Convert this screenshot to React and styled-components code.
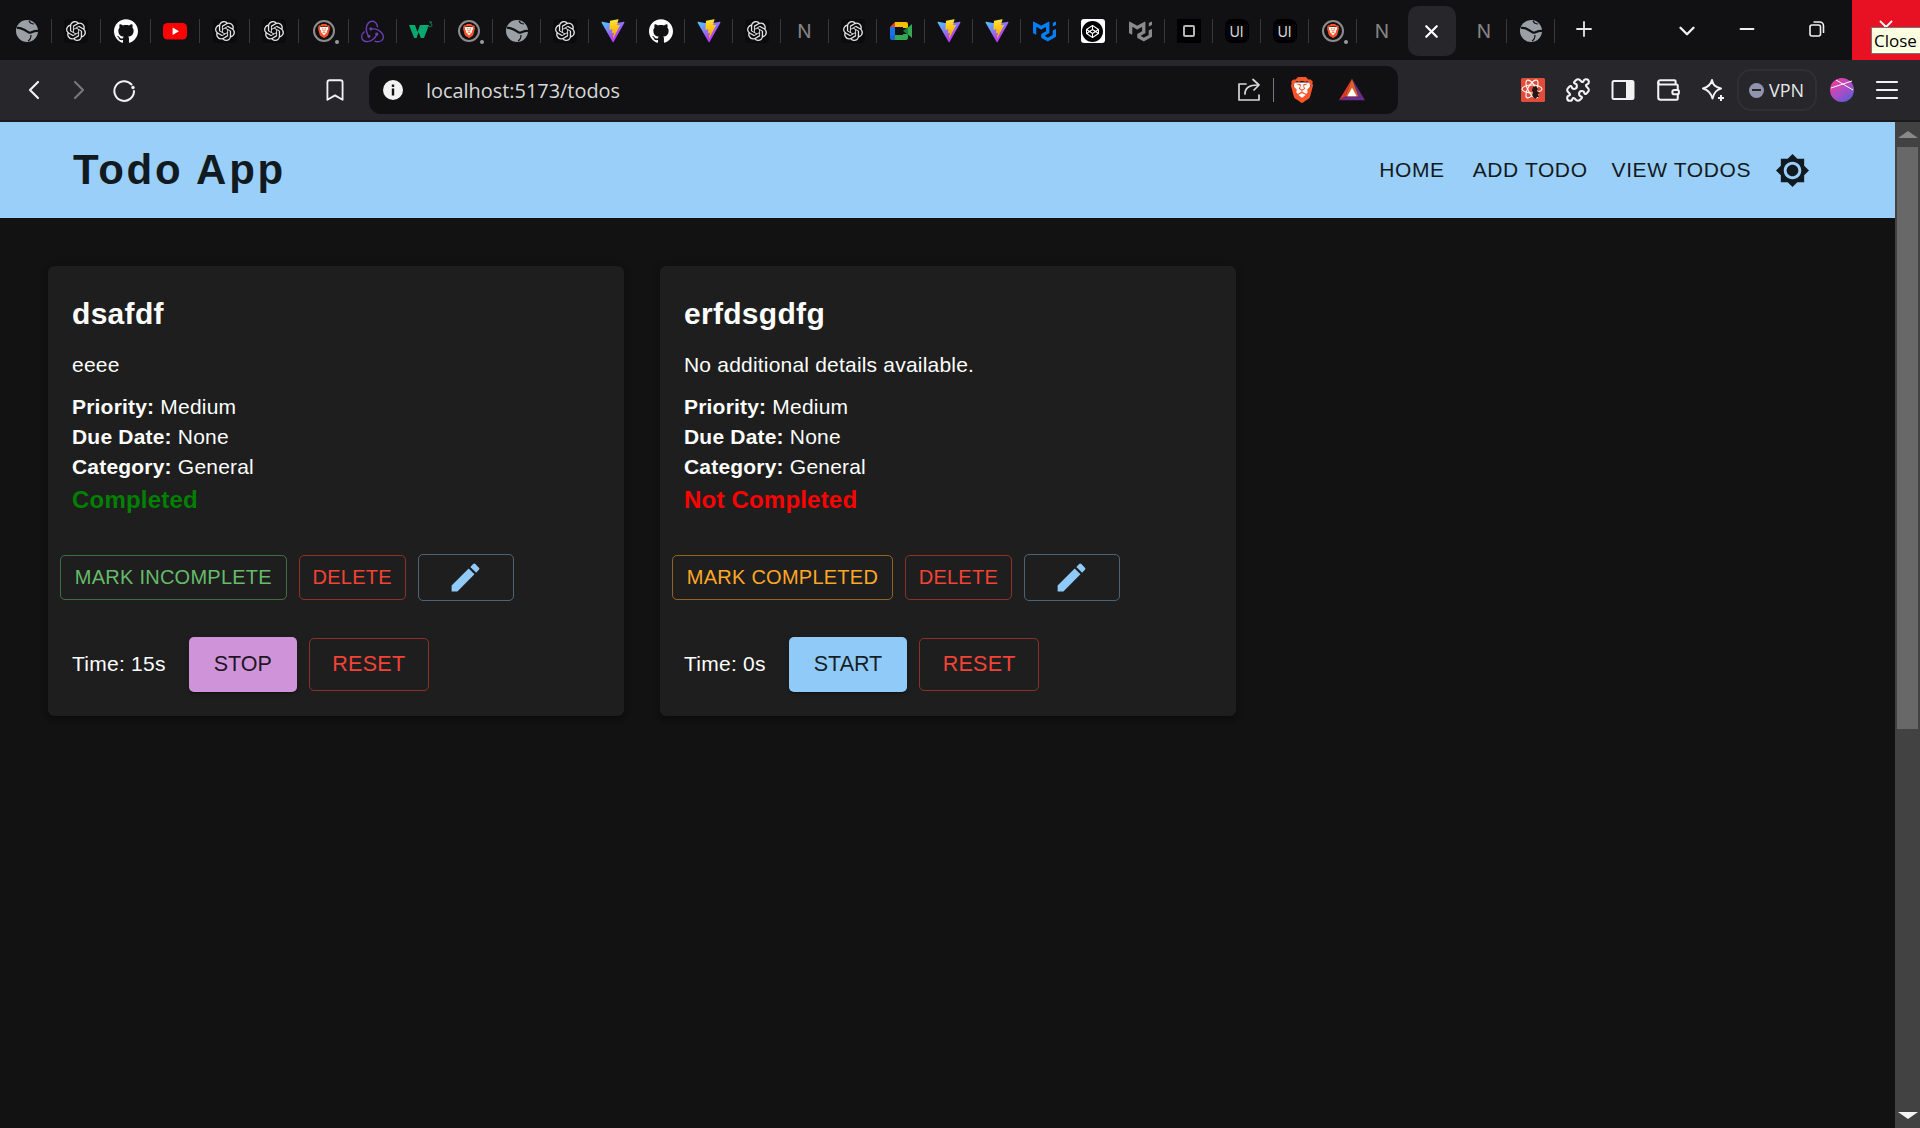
import React from 'react';
import styled, { createGlobalStyle } from 'styled-components';
import { SiBrave, SiCodepen, SiGithub, SiMui, SiOpenai, SiRedux } from 'react-icons/si';
import { MdBrightness7, MdEdit } from 'react-icons/md';
import { Bookmark, ChevronDown, ChevronLeft, ChevronRight, Minus, Plus, Puzzle, Wallet, X } from 'lucide-react';

const GlobalStyle = createGlobalStyle`
  html, body {
    margin: 0;
    padding: 0;
    background: #121212;
  }
  * {
    box-sizing: border-box;
  }
`;

const Screen = styled.div`
  display: flex;
  flex-direction: column;
  width: 1920px;
  height: 1128px;
  overflow: hidden;
  font-family: "Liberation Sans", Arial, sans-serif;
  color: #fff;
`;

/* browser tab strip */
const TabStrip = styled.div`
  display: flex;
  align-items: stretch;
  height: 60px;
  padding-left: 2px;
  background: #111114;
`;

const Tab = styled.div`
  position: relative;
  display: flex;
  align-items: center;
  justify-content: center;
  flex: none;
  width: ${p => p.$width || 48}px;
  padding-top: 2px;
  padding-left: ${p => p.$nudge || 0}px;

  ${p => !p.$last && `
    &::after {
      content: '';
      position: absolute;
      right: 0;
      top: 19px;
      width: 1px;
      height: 24px;
      background: #3a3a3e;
    }
  `}
`;

const ActiveTab = styled.div`
  display: flex;
  align-items: center;
  justify-content: center;
  flex: none;
  width: 48px;
  height: 50px;
  margin-top: 6px;
  border-radius: 10px;
  background: #26262b;
  color: #fff;
`;

const NewTab = styled.div`
  display: flex;
  align-items: center;
  justify-content: center;
  flex: none;
  width: 58px;
  padding-bottom: 2px;
  color: #e8e8e8;
`;

const IconTile = styled.div`
  display: flex;
  align-items: center;
  justify-content: center;
  width: 24px;
  height: 24px;
  border-radius: ${p => p.$radius ?? 4}px;
  background: ${p => p.$bg || '#0b0b0d'};
  color: ${p => p.$color || '#e4e4e4'};
`;

const LetterIcon = styled.span`
  font-family: Inter, "Liberation Sans", sans-serif;
  font-size: 19px;
  font-weight: 400;
  color: #858585;
`;

const UiLetters = styled.span`
  font-family: Inter, "Liberation Sans", sans-serif;
  font-size: 14px;
  font-weight: 400;
  color: #d8d8d8;
`;

const OutlineSquare = styled.span`
  width: 12px;
  height: 12px;
  border: 2px solid #b5b5b5;
  border-radius: 2px;
`;

const BraveRing = styled.div`
  position: relative;
  display: flex;
  align-items: center;
  justify-content: center;
  width: 22px;
  height: 22px;
  border: 2px solid #8d8d8d;
  border-radius: 50%;

  &::after {
    content: '';
    position: absolute;
    right: -6px;
    bottom: -4px;
    width: 4px;
    height: 4px;
    border-radius: 50%;
    background: #9a9a9a;
  }
`;

const WindowControls = styled.div`
  display: flex;
  margin-left: auto;
`;

const WindowButton = styled.div`
  display: flex;
  align-items: center;
  justify-content: center;
  width: ${p => p.$width}px;
  padding-bottom: ${p => p.$drop ? 0 : 2}px;
  padding-top: ${p => p.$drop ? 2 : 0}px;
  color: #f0f0f0;
`;

const CloseButton = styled.div`
  position: relative;
  display: flex;
  justify-content: center;
  width: 68px;
  padding-top: 16px;
  background: #e81123;
  color: #fff;
`;

const Tooltip = styled.div`
  position: absolute;
  left: 19px;
  top: 27px;
  width: 55px;
  height: 27px;
  padding-left: 2px;
  border: 1px solid #767676;
  background: #ffffe1;
  color: #000;
  font-family: "Open Sans", sans-serif;
  font-size: 17px;
  line-height: 25px;
  white-space: nowrap;
`;

/* browser toolbar */
const Toolbar = styled.div`
  display: flex;
  align-items: center;
  height: 62px;
  padding-top: 0;
  background: #26262b;
  border-bottom: 2px solid #1b1b1e;
`;

const NavIcons = styled.div`
  display: flex;
  align-items: center;
  width: 369px;
  padding-left: 11px;
`;

const NavIcon = styled.div`
  display: flex;
  justify-content: center;
  flex: none;
  width: ${p => p.$width || 45}px;
  margin-left: ${p => p.$offset || 0}px;
  color: ${p => p.$color || '#f2f2f2'};
`;

const UrlBar = styled.div`
  display: flex;
  align-items: center;
  width: 1029px;
  height: 48px;
  padding: 0 33px 0 14px;
  border-radius: 12px;
  background: #111114;
`;

const UrlText = styled.span`
  margin-left: 23px;
  font-family: "Open Sans", sans-serif;
  font-size: 19.9px;
  color: #d8d8d8;
`;

const UrlIcons = styled.div`
  display: flex;
  align-items: center;
  margin-left: auto;
`;

const UrlDivider = styled.span`
  width: 1px;
  height: 24px;
  margin: 0 15px 0 12px;
  background: #77777c;
`;

const ToolIcons = styled.div`
  display: flex;
  align-items: center;
  flex: 1;
  padding-left: 112px;
`;

const ToolIcon = styled.div`
  display: flex;
  justify-content: center;
  flex: none;
  width: 45px;
  color: #f2f2f2;
`;

const VpnPill = styled.div`
  display: flex;
  align-items: center;
  flex: none;
  width: 80px;
  height: 42px;
  margin: 0 2px;
  padding-left: 10px;
  border: 2px solid #2f2f35;
  border-radius: 14px;
  font-family: "Open Sans", sans-serif;
  font-size: 18px;
  color: #e8e8e8;
`;

const VpnDot = styled.span`
  display: flex;
  align-items: center;
  justify-content: center;
  width: 15px;
  height: 15px;
  margin-right: 5px;
  border-radius: 50%;
  background: #9094ad;

  &::before {
    content: '';
    width: 9px;
    height: 2px;
    background: #26262b;
  }
`;

/* page */
const Viewport = styled.div`
  display: flex;
  flex: 1;
  min-height: 0;
`;

const Page = styled.main`
  flex: 1;
  background: #121212;
`;

const AppBar = styled.header`
  display: flex;
  align-items: center;
  justify-content: space-between;
  height: 96px;
  padding: 0 85px 0 73px;
  background: #9acffa;
  color: #121a21;
`;

const Brand = styled.h1`
  margin: 0;
  font-size: 42px;
  font-weight: 700;
  letter-spacing: 2.7px;
  line-height: 1;
`;

const Nav = styled.nav`
  display: flex;
  align-items: center;
`;

const NavLink = styled.a`
  margin-right: ${p => p.$gap}px;
  padding-bottom: 2px;
  font-size: 21px;
  letter-spacing: 0.6px;
  line-height: 1;
  white-space: nowrap;
`;

const CardGrid = styled.div`
  display: flex;
  gap: 36px;
  padding: 48px;
`;

const Card = styled.article`
  width: 576px;
  height: 450px;
  border-radius: 6px;
  background: #1e1e1e;
  box-shadow: 0 3px 3px -2px rgba(0, 0, 0, 0.2), 0 3px 4px rgba(0, 0, 0, 0.14), 0 1px 8px rgba(0, 0, 0, 0.12);
`;

const CardContent = styled.div`
  padding: 27.5px 24px 24px;
`;

const Title = styled.h2`
  margin: 0 0 16px;
  font-size: 30px;
  font-weight: 700;
  letter-spacing: 0.3px;
  line-height: 40px;
`;

const Details = styled.p`
  margin: 0 0 12px;
  font-size: 21px;
  letter-spacing: 0.2px;
  line-height: 30px;
`;

const Field = styled.div`
  font-size: 21px;
  letter-spacing: 0.2px;
  line-height: 30px;

  strong {
    font-weight: 700;
  }
`;

const Status = styled.div`
  font-size: 24px;
  font-weight: 700;
  letter-spacing: 0.2px;
  line-height: 36px;
  color: ${p => (p.$done ? '#008000' : '#ff0000')};
`;

const Actions = styled.div`
  display: flex;
  align-items: center;
  gap: 12px;
  padding: 12px;
`;

const OutlineButton = styled.button`
  display: flex;
  align-items: center;
  justify-content: center;
  height: ${p => p.$height || 45}px;
  padding: ${p => `0 ${p.$pad || 13.8}px`};
  border: 1px solid ${p => p.$border};
  border-radius: 5px;
  background: transparent;
  color: ${p => p.$color};
  font-family: inherit;
  font-size: ${p => p.$size || 20}px;
  letter-spacing: 0.25px;
  white-space: nowrap;
`;

const TimerRow = styled.div`
  display: flex;
  align-items: center;
  padding: 24px;
`;

const TimeLabel = styled.span`
  margin-right: 23px;
  font-size: 21px;
  letter-spacing: 0.25px;
`;

const SolidButton = styled.button`
  display: flex;
  align-items: center;
  justify-content: center;
  height: 55px;
  margin-right: 12px;
  padding: 0 25px;
  border: 0;
  border-radius: 5px;
  background: ${p => p.$bg};
  color: rgba(0, 0, 0, 0.87);
  font-family: inherit;
  font-size: 21.5px;
  box-shadow: 0 3px 1px -2px rgba(0, 0, 0, 0.2), 0 2px 2px rgba(0, 0, 0, 0.14), 0 1px 5px rgba(0, 0, 0, 0.12);
`;

const Scrollbar = styled.aside`
  display: flex;
  flex-direction: column;
  align-items: center;
  flex: none;
  width: 25px;
  background: #424242;
`;

const ScrollArrow = styled.div`
  display: flex;
  align-items: center;
  justify-content: center;
  flex: none;
  height: 25px;
  margin-top: ${p => (p.$down ? 'auto' : 0)};

  &::before {
    content: '';
    border-left: 10px solid transparent;
    border-right: 10px solid transparent;
    ${p => (p.$down
      ? 'border-top: 7px solid #f4f4f4;'
      : 'border-bottom: 7px solid #8a8a8a;')}
  }
`;

const ScrollThumb = styled.div`
  flex: none;
  width: 21px;
  height: 582px;
  background: #686868;
`;

/* drawings */
const Globe = () => (
  <svg width="22" height="22" viewBox="0 0 22 22">
    <circle cx="11" cy="11" r="11" fill="#9aa0a6" />
    <path d="M1 8C4.500 7 6.500 9 9.500 10.500s3 3 5.500 2 4-2 7-1.500" fill="none" stroke="#111114" strokeWidth="2.200" />
    <path d="M13 1c1 2 3 3 5 3M15 15c0 3-1 5-3 6" fill="none" stroke="#111114" strokeWidth="1.200" />
  </svg>
);

const ViteLogo = () => (
  <svg width="24" height="24" viewBox="0 0 410 404" fill="none">
    <path d="M399.641 59.5246L215.643 388.545C211.844 395.338 202.084 395.378 198.228 388.618L10.5817 59.5563C6.38087 52.1896 12.6802 43.2665 21.0281 44.7586L205.223 77.6824C206.398 77.8924 207.601 77.8904 208.776 77.6763L389.119 44.8058C397.439 43.2894 403.768 52.1434 399.641 59.5246Z" fill="url(#viteA)" />
    <path d="M292.965 1.5744L156.801 28.2552C154.563 28.6937 152.906 30.5903 152.771 32.8664L144.395 174.33C144.198 177.662 147.258 180.248 150.51 179.498L188.42 170.749C191.967 169.931 195.172 173.055 194.443 176.622L183.18 231.775C182.422 235.487 185.907 238.661 189.532 237.56L212.947 230.446C216.577 229.344 220.065 232.527 219.297 236.242L201.398 322.875C200.278 328.294 207.486 331.249 210.492 326.603L212.5 323.5L323.454 102.072C325.312 98.3645 322.108 94.137 318.036 94.9228L279.014 102.454C275.347 103.161 272.227 99.746 273.262 96.1583L298.731 7.86689C299.767 4.27314 296.636 0.855181 292.965 1.5744Z" fill="url(#viteB)" />
    <defs>
      <linearGradient id="viteA" x1="6" y1="33" x2="235" y2="344" gradientUnits="userSpaceOnUse">
        <stop stopColor="#41D1FF" />
        <stop offset="1" stopColor="#BD34FE" />
      </linearGradient>
      <linearGradient id="viteB" x1="194.651" y1="8.81818" x2="236.076" y2="292.989" gradientUnits="userSpaceOnUse">
        <stop stopColor="#FFEA83" />
        <stop offset="0.0833" stopColor="#FFDD35" />
        <stop offset="1" stopColor="#FFA800" />
      </linearGradient>
    </defs>
  </svg>
);

const Youtube = () => (
  <svg width="24" height="24" viewBox="0 0 24 24">
    <rect y="4" width="24" height="16.5" rx="4.5" fill="#f00" />
    <path d="M9.6 8.6v7.4l6.4-3.7z" fill="#fff" />
  </svg>
);

const W3Logo = () => (
  <svg width="24" height="24" viewBox="0 0 24 24">
    <path d="M0 6h6l2.500 7L11 6h4l5 0-5 13h-3.200L9.600 13l-2 6H5.200z" fill="#04aa6d" />
    <path d="M20 3h2.800l-1.300 1.600c1 .2 1.400.8 1.400 1.500 0 1-.8 1.600-1.800 1.600-.7 0-1.200-.2-1.500-.5" fill="none" stroke="#04aa6d" strokeWidth="0.800" />
  </svg>
);

const GoogleMeet = () => (
  <svg width="24" height="24" viewBox="0 0 24 24">
    <path d="M6 3h11a2 2 0 0 1 2 2v4h-5V8H6z" fill="#fbbc04" />
    <path d="M6 3 1 8h5z" fill="#ea4335" />
    <path d="M1 8h5v8H1z" fill="#1a73e8" />
    <path d="M1 16h5v5H3a2 2 0 0 1-2-2z" fill="#1967d2" />
    <path d="M6 16h8v-1h5v4a2 2 0 0 1-2 2H6z" fill="#34a853" />
    <path d="M14 12l5-4v8z" fill="#188038" />
    <path d="M19 8.500 23 5v14l-4-3.500z" fill="#34a853" />
  </svg>
);

const BraveIcon = ({ size = 14 }) => (
  <svg width={size} height={size} viewBox="0 0 24 24">
    <path d="M4 5h16l-2 13-6 5-6-5z" fill="#fff" />
    <foreignObject width="24" height="24">
      <SiBrave size={24} color="#fb542b" />
    </foreignObject>
  </svg>
);

const BatLogo = () => (
  <svg width="28" height="24" viewBox="0 0 28 24">
    <path d="M14 0 0 23l7-4z" fill="#e5352b" />
    <path d="M14 0 28 23H0l7-4h14z" fill="#6a2c8c" />
    <path d="M14 0 7 19h14z" fill="#f26b2a" opacity="0.9" />
    <path d="M14 9.500 9 18.600h10z" fill="#fff" />
  </svg>
);

const ReloadIcon = () => (
  <svg width="24" height="24" viewBox="0 0 24 24" fill="none" stroke="#f2f2f2" strokeWidth="2" strokeLinecap="round">
    <path d="M19.500 6.500A9.800 9.800 0 1 0 22 13" />
    <circle cx="21" cy="9.500" r="1.700" fill="#f2f2f2" stroke="none" />
  </svg>
);

const SidePanel = () => (
  <svg width="24" height="24" viewBox="0 0 24 24">
    <rect x="1.500" y="3" width="21" height="18" rx="1.500" fill="none" stroke="#f2f2f2" strokeWidth="2" />
    <rect x="15" y="3" width="8" height="18" fill="#f2f2f2" />
  </svg>
);

const Sparkle = () => (
  <svg width="24" height="24" viewBox="0 0 24 24" fill="none" stroke="#f2f2f2" strokeWidth="2" strokeLinejoin="round">
    <path d="M11 2c1 5 3 7 9 8.500-5 1.500-7 4-8.500 10C10 15 7 12 2 10.500 7 9 10 7 11 2z" />
    <path d="M20 17v6M17 20h6" strokeWidth="2" />
  </svg>
);

const ShareIcon = () => (
  <svg width="24" height="24" viewBox="0 0 24 24" fill="none" stroke="#d8d8d8" strokeWidth="1.700" strokeLinecap="round" strokeLinejoin="round">
    <path d="M9 6H2v16h20v-5" />
    <path d="M8 16c0-6 4-9 13-9" />
    <path d="M16 1.500 22 7l-5 5" />
  </svg>
);

const InfoIcon = () => (
  <svg width="20" height="20" viewBox="0 0 20 20">
    <circle cx="10" cy="10" r="10" fill="#f2f2f2" />
    <rect x="8.800" y="8.500" width="2.400" height="7" fill="#111114" />
    <rect x="8.800" y="4.500" width="2.400" height="2.400" fill="#111114" />
  </svg>
);

const AtomExtension = () => (
  <svg width="24" height="24" viewBox="0 0 24 24">
    <rect width="24" height="24" rx="1.500" fill="#e34c38" />
    <g fill="none" stroke="#fff" strokeWidth="1.100">
      <ellipse cx="11" cy="11" rx="10" ry="4" />
      <ellipse cx="11" cy="11" rx="10" ry="4" transform="rotate(60 11 11)" />
      <ellipse cx="11" cy="11" rx="10" ry="4" transform="rotate(120 11 11)" />
    </g>
    <path d="M12 9l3-1 2 3-1 2 3 2-2 1 1 3-2 0-1 2-2-1-2-3 1-2-1-3z" fill="#231815" />
  </svg>
);

const Avatar = () => (
  <svg width="24" height="24" viewBox="0 0 24 24">
    <defs>
      <linearGradient id="avatarFill" x1="0.100" y1="0.100" x2="0.800" y2="1">
        <stop offset="0" stopColor="#ec3d9c" />
        <stop offset="0.500" stopColor="#b14cc4" />
        <stop offset="1" stopColor="#5b5bd6" />
      </linearGradient>
    </defs>
    <circle cx="12" cy="12" r="12" fill="url(#avatarFill)" />
    <path d="M1 10 22 3M6 2l17 10" stroke="#fff" strokeWidth="1" fill="none" />
  </svg>
);

const Hamburger = () => (
  <svg width="24" height="24" viewBox="0 0 24 24" stroke="#f2f2f2" strokeWidth="2.200" strokeLinecap="round">
    <path d="M2 4h20M2 12h20M2 20h20" />
  </svg>
);

const RestoreIcon = () => (
  <svg width="16" height="16" viewBox="0 0 16 16" fill="none" stroke="#f0f0f0" strokeWidth="1.600">
    <rect x="1" y="4" width="10.500" height="11" rx="2" />
    <path d="M4.500 1h6a4 4 0 0 1 4 4v7" />
  </svg>
);

const Openai = () => (
  <IconTile>
    <SiOpenai size={20} />
  </IconTile>
);

const Brave = () => (
  <BraveRing>
    <BraveIcon />
  </BraveRing>
);

const Letter = () => <LetterIcon>N</LetterIcon>;

const UiTile = () => (
  <IconTile $bg="#000" $radius={7}>
    <UiLetters>UI</UiLetters>
  </IconTile>
);

const tabs = [
  [Globe, 49.5], [Openai, 49.5], [() => <SiGithub size={24} color="#fff" />, 49.5], [Youtube, 49.5],
  [Openai, 49.5], [Openai, 49.5], [Brave, 49.5],
  [() => <SiRedux size={23} color="#6a3fb0" />], [W3Logo], [Brave], [Globe], [Openai], [ViteLogo],
  [() => <SiGithub size={24} color="#fff" />], [ViteLogo], [Openai], [Letter], [Openai], [GoogleMeet],
  [ViteLogo], [ViteLogo], [() => <SiMui size={23} color="#007fff" />],
  [() => <IconTile $bg="#fff" $radius={3} $color="#000"><SiCodepen size={21} /></IconTile>],
  [() => <SiMui size={23} color="#8a8a8a" />],
  [() => <IconTile $bg="#000" $radius={0}><OutlineSquare /></IconTile>],
  [UiTile], [UiTile], [Brave],
];

const todos = [
  { title: 'dsafdf', details: 'eeee', done: true, time: 15, running: true },
  { title: 'erfdsgdfg', details: 'No additional details available.', done: false, time: 0, running: false },
];

const TodoCard = ({ todo }) => (
  <Card>
    <CardContent>
      <Title>{todo.title}</Title>
      <Details>{todo.details}</Details>
      <Field><strong>Priority:</strong> Medium</Field>
      <Field><strong>Due Date:</strong> None</Field>
      <Field><strong>Category:</strong> General</Field>
      <Status $done={todo.done}>{todo.done ? 'Completed' : 'Not Completed'}</Status>
    </CardContent>
    <Actions>
      {todo.done
        ? <OutlineButton $color="#66bb6a" $border="rgba(102, 187, 106, 0.5)">MARK INCOMPLETE</OutlineButton>
        : <OutlineButton $color="#ffa726" $border="rgba(255, 167, 38, 0.5)">MARK COMPLETED</OutlineButton>}
      <OutlineButton $color="#f44336" $border="rgba(244, 67, 54, 0.5)" $pad={12.8}>DELETE</OutlineButton>
      <OutlineButton $color="#90caf9" $border="rgba(144, 202, 249, 0.4)" $height={47} $pad={28.5}>
        <MdEdit size={37} />
      </OutlineButton>
    </Actions>
    <TimerRow>
      <TimeLabel>Time: {todo.time}s</TimeLabel>
      <SolidButton $bg={todo.running ? '#ce93d8' : '#90caf9'}>{todo.running ? 'STOP' : 'START'}</SolidButton>
      <OutlineButton $color="#f44336" $border="rgba(244, 67, 54, 0.5)" $height={53} $pad={22.5} $size={21.5}>RESET</OutlineButton>
    </TimerRow>
  </Card>
);

const App = () => (
  <Screen>
    <GlobalStyle />
    <TabStrip>
      {tabs.map(([Icon, width], i) => (
        <Tab key={i} $width={width}><Icon /></Tab>
      ))}
      <Tab $width={51} $last><Letter /></Tab>
      <ActiveTab><X size={21} strokeWidth={2.5} /></ActiveTab>
      <Tab $width={51} $nudge={6}><Letter /></Tab>
      <Tab><Globe /></Tab>
      <NewTab><Plus size={24} strokeWidth={1.8} /></NewTab>
      <WindowControls>
        <WindowButton $width={50} $drop><ChevronDown size={26} strokeWidth={2.2} /></WindowButton>
        <WindowButton $width={70}><Minus size={22} strokeWidth={2.2} /></WindowButton>
        <WindowButton $width={70}><RestoreIcon /></WindowButton>
        <CloseButton>
          <X size={22} strokeWidth={2} />
          <Tooltip>Close</Tooltip>
        </CloseButton>
      </WindowControls>
    </TabStrip>
    <Toolbar>
      <NavIcons>
        <NavIcon><ChevronLeft size={32} strokeWidth={1.6} /></NavIcon>
        <NavIcon $color="#77777c"><ChevronRight size={32} strokeWidth={1.6} /></NavIcon>
        <NavIcon><ReloadIcon /></NavIcon>
        <NavIcon $offset={166}><Bookmark size={26} strokeWidth={1.7} /></NavIcon>
      </NavIcons>
      <UrlBar>
        <InfoIcon />
        <UrlText>localhost:5173/todos</UrlText>
        <UrlIcons>
          <ShareIcon />
          <UrlDivider />
          <BraveIcon size={26} />
          <NavIcon $width={26} $offset={24}><BatLogo /></NavIcon>
        </UrlIcons>
      </UrlBar>
      <ToolIcons>
        <ToolIcon><AtomExtension /></ToolIcon>
        <ToolIcon><Puzzle size={26} strokeWidth={1.9} /></ToolIcon>
        <ToolIcon><SidePanel /></ToolIcon>
        <ToolIcon><Wallet size={26} strokeWidth={1.9} /></ToolIcon>
        <ToolIcon><Sparkle /></ToolIcon>
        <VpnPill><VpnDot />VPN</VpnPill>
        <ToolIcon><Avatar /></ToolIcon>
        <ToolIcon><Hamburger /></ToolIcon>
      </ToolIcons>
    </Toolbar>
    <Viewport>
      <Page>
        <AppBar>
          <Brand>Todo App</Brand>
          <Nav>
            <NavLink $gap={28}>HOME</NavLink>
            <NavLink $gap={24}>ADD TODO</NavLink>
            <NavLink $gap={24}>VIEW TODOS</NavLink>
            <MdBrightness7 size={35} />
          </Nav>
        </AppBar>
        <CardGrid>
          {todos.map(todo => <TodoCard key={todo.title} todo={todo} />)}
        </CardGrid>
      </Page>
      <Scrollbar>
        <ScrollArrow />
        <ScrollThumb />
        <ScrollArrow $down />
      </Scrollbar>
    </Viewport>
  </Screen>
);

export default App;
